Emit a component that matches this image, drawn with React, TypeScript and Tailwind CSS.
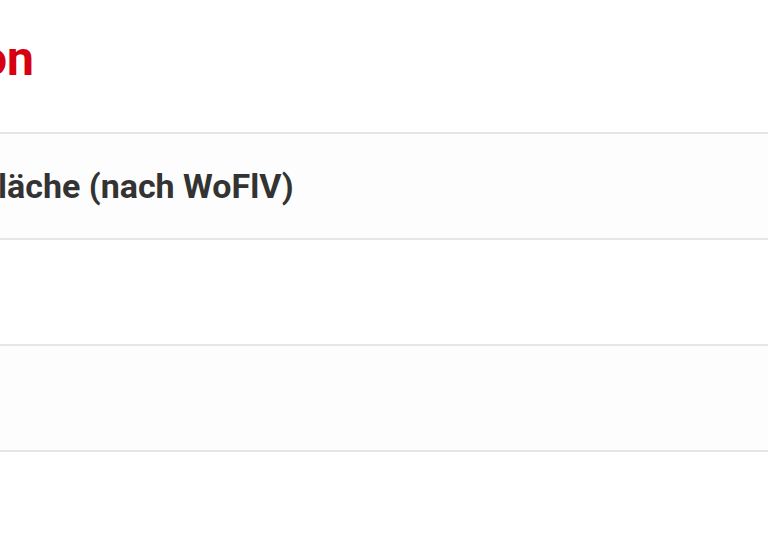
export default function App() {
  const rows = [
    { label: 'läche (nach WoFlV)', tint: true },
    { label: '', tint: false },
    { label: '', tint: true },
  ]

  return (
    <div className="w-[768px] h-[560px] overflow-hidden bg-white font-['Roboto',sans-serif]">
      {/* Überschrift, links abgeschnitten */}
      <div className="h-[132px] pt-[27px]">
        <h2 className="-ml-[20px] text-[48px] leading-[64px] font-bold text-[#d6000f] whitespace-nowrap">
          on
        </h2>
      </div>

      {/* Tabellenzeilen */}
      <div className="border-t-2 border-[#e6e6e6]">
        {rows.map((row, i) => (
          <div
            key={i}
            className={`h-[106px] flex items-center border-b-2 border-[#e6e6e6] ${
              row.tint ? 'bg-[#fdfdfd]' : 'bg-white'
            }`}
          >
            <span className="-ml-[2px] text-[34px] font-bold text-[#333333] whitespace-nowrap">
              {row.label}
            </span>
          </div>
        ))}
      </div>
    </div>
  )
}
